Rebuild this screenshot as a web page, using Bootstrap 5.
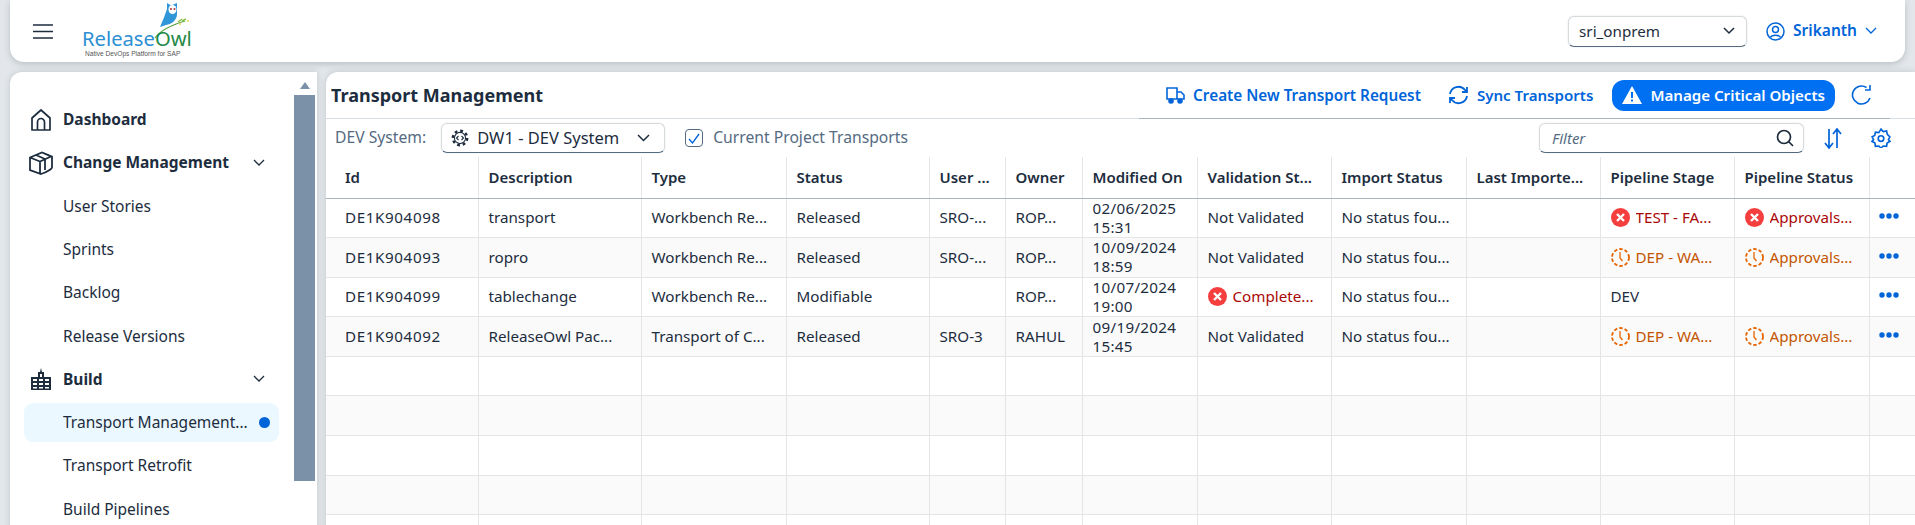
<!DOCTYPE html>
<html lang="en"><head><meta charset="utf-8"><title>Transport Management</title>
<link href="https://cdn.jsdelivr.net/npm/bootstrap@5.3.0/dist/css/bootstrap.min.css" rel="stylesheet">
<style>
html,body{height:525px;overflow:hidden}
body{background:#e3e7eb;font-family:"Noto Sans",sans-serif;font-size:15px;color:#1d2d3e;width:1915px}
.shell{padding:0 10px 0 10px;height:525px;display:grid;grid-template-rows:62px 1fr;grid-template-columns:307px 1fr;column-gap:9px;row-gap:10px}
.topbar{grid-column:1/3;background:#fff;border-radius:0 0 14px 14px;box-shadow:0 2px 6px rgba(60,70,80,.25);padding:0 28px 0 23px}
.menu-btn{width:20px;margin-right:29px;flex:none}
.logo{width:108px;height:58px;position:relative;flex:none;align-self:flex-start}
.logo svg{position:absolute;left:60px;top:0}
.logo-word{position:absolute;left:0;top:28px;font:400 20.2px/21px "Noto Sans",sans-serif;color:#2d8fd2;white-space:nowrap}
.logo-word b{font-weight:400;color:#1f8a46}
.logo-sub{position:absolute;left:3px;top:50px;font:400 6.6px/8px "Liberation Sans",sans-serif;color:#555;white-space:nowrap}
.tenant{width:179px;height:31px;border:1px solid #d5dadd;border-bottom-color:#556b82;border-radius:6px;padding:0 11px 0 10px;background:#fff;color:#1d2d3e;margin-right:19px;box-shadow:0 0 2px rgba(0,0,0,.12)}
.tenant span{font-size:15.2px}
.user-link{color:#0064d9;font-weight:600;font-size:15.5px;gap:8px}
.sidepanel{background:#fff;border-radius:12px 0 0 0;overflow:hidden;position:relative;padding:26px 38px 0 14px;box-shadow:0 0 6px rgba(60,70,80,.2);height:460px}
.side-track{position:absolute;right:2px;top:0;bottom:0;width:21px}
.side-arrow{width:0;height:0;border:5.5px solid transparent;border-bottom:7px solid #7b91a8;border-top:0;margin:10px auto 6px}
.side-thumb{height:386px;background:#7b91a8}
.nav-row{height:43.3px;margin:0;padding:0 0 0 39px;white-space:nowrap;font-size:15.5px;position:relative;list-style:none}
.nav-head{font-weight:700;padding-left:0;gap:10px}
.nav-head svg.ico{width:24px;height:24px;margin-left:5px;margin-right:0;flex:none}
.nav-head .chev{margin-left:auto;margin-right:14px}
.nav-active{background:#ebf8ff;border-radius:9px;height:39px;margin:2px 0 2.3px}
.dot{width:11px;height:11px;border-radius:50%;background:#0064d9;margin-left:auto;margin-right:9px;flex:none}
.mainpanel{background:#fff;border-radius:12px 0 0 0;overflow:hidden;margin-right:-10px;box-shadow:0 0 6px rgba(60,70,80,.2);height:460px}
.titlebar{height:47px;padding:0 43px 0 5px;border-bottom:1px solid #d9dee2;position:relative}
.titlebar h1{font-size:18px;font-weight:700;margin:2px 0 0}
.titlebar::after{content:"";position:absolute;left:813px;right:25px;bottom:-1px;height:1px;background:#a9b4be}
.act{color:#0064d9;font-weight:600;font-size:15.3px;gap:8px;white-space:nowrap;margin-right:27px}
.act-sync{margin-right:19px;font-size:15.1px}
.act-crit{background:#0070f2;color:#fff;border-radius:12px;height:31px;padding:0 10px 0 10px;margin-right:16px;font-size:15.1px}
.filterbar{height:38px;padding:4px 24px 4px 9px}
.lbl{color:#556b82;font-size:15.7px}
.sys-select{width:224px;height:30px;border:1px solid #d5dadd;border-bottom-color:#556b82;border-radius:6px;margin-left:15px;margin-right:20px;padding:0 14px 0 9px;box-shadow:0 0 2px rgba(0,0,0,.1);gap:8px;font-size:16.5px}
.check-box{width:18px;height:18px;border:1px solid #556b82;border-radius:4px;margin-right:10px}
.filter-box{width:265px;height:30px;border:1px solid #d5dadd;border-bottom-color:#556b82;border-radius:6px;padding:0 9px 0 12px;box-shadow:0 0 2px rgba(0,0,0,.1);font-style:italic;color:#556b82;margin-right:19px}
.sort-ico{margin-right:28px}
.grid-tbl{table-layout:fixed;width:1589px;margin:0;border-collapse:collapse;font-size:15.2px;color:#1d2d3e}
.grid-tbl th,.grid-tbl td{padding:0 8px 0 19px;border:0;border-right:1px solid #e5e5e5;white-space:nowrap;overflow:hidden;text-overflow:ellipsis;vertical-align:middle;background:transparent;color:inherit;box-shadow:none}
.grid-tbl th{height:41px;font-size:15px;font-weight:600;border-bottom:1px solid #a9b4be;padding-left:19px}
.grid-tbl td{height:39.6px;border-bottom:1px solid #e5e5e5;line-height:19px}
.grid-tbl tbody tr:nth-child(even) td{background:#fafafa}
.grid-tbl .c-id{width:152px}.grid-tbl .c-desc{width:163px}.grid-tbl .c-type{width:145px}.grid-tbl .c-status{width:143px}.grid-tbl .c-user{width:76px}.grid-tbl .c-own{width:77px}.grid-tbl .c-mod{width:115px}.grid-tbl .c-val{width:134px}.grid-tbl .c-imp{width:135px}.grid-tbl .c-last{width:134px}.grid-tbl .c-stage{width:134px}.grid-tbl .c-pipe{width:135px}.grid-tbl .c-more{width:46px}
.grid-tbl td.wrap{white-space:normal;line-height:19px;padding-left:10px;padding-right:0;letter-spacing:.3px}
.grid-tbl td.code-cell{letter-spacing:.6px}
.grid-tbl th.tight,.grid-tbl td.tight{padding-left:10px;padding-right:6px}
.grid-tbl td.stat,.grid-tbl th.stat{padding-left:10px}
.grid-tbl td.more{padding:0 0 6px 9px;border-right:0}
.grid-tbl th.more{border-right:0}
.sts{display:flex;align-items:center;gap:6px;min-width:0}
.sts span{overflow:hidden;text-overflow:ellipsis;white-space:nowrap;min-width:0}
.sts svg{flex:none}
.grid-tbl td.neg{color:#aa0808}.grid-tbl td.crit{color:#c35500}
</style></head><body>
<div class="shell">
<header class="topbar d-flex align-items-center">
 <svg class="menu-btn" viewBox="0 0 20 15" height="15"><path d="M0 1h20M0 7.5h20M0 14h20" stroke="#1d2d3e" stroke-width="1.7"/></svg>
 <div class="logo">
  <svg width="48" height="40" viewBox="0 0 48 40"><path d="M18 27c3-7 5-12 7-18l0-6 4 2.500 6-2.500 0 11c0 6-5 10-11 11z" fill="#2f96d8"/><ellipse cx="30.500" cy="9.500" rx="4" ry="4.500" fill="#fff"/><circle cx="29" cy="9" r="1" fill="#a33"/><circle cx="32.500" cy="9" r="1" fill="#a33"/><path d="M13 38c6-8 16-13 30-17" fill="none" stroke="#4f9e3a" stroke-width="1.200"/><path d="M36 22l4-3M40 21l4-2" stroke="#8bc34a" stroke-width="1.500"/><circle cx="46" cy="21" r="1" fill="#e8d44a"/><circle cx="38" cy="24" r="1" fill="#e8d44a"/></svg>
  <div class="logo-word">Release<b>Owl</b></div>
  <div class="logo-sub">Native DevOps Platform for SAP</div>
 </div>
 <div class="tenant d-flex align-items-center justify-content-between ms-auto"><span>sri_onprem</span><svg width="12" height="8" viewBox="0 0 12 8"><path d="M1 1l5 5 5-5" fill="none" stroke="#1d2d3e" stroke-width="1.500"/></svg></div>
 <div class="user-link d-flex align-items-center">
  <svg width="19" height="19" viewBox="0 0 19 19" fill="none" stroke="#0064d9" stroke-width="1.500"><circle cx="9.500" cy="9.500" r="8.500"/><circle cx="9.500" cy="7.500" r="3"/><path d="M4.500 15.500c1-3 9-3 10 0"/></svg>
  <span>Srikanth</span>
  <svg width="12" height="8" viewBox="0 0 12 8"><path d="M1 1l5 5 5-5" fill="none" stroke="#0064d9" stroke-width="1.300"/></svg>
 </div>
</header>
<aside class="sidepanel">
 <div class="side-track"><div class="side-arrow"></div><div class="side-thumb"></div></div>
 <ul class="p-0 m-0">
  <li class="nav-row nav-head d-flex align-items-center"><svg class="ico" viewBox="0 0 24 24" fill="none" stroke="#1d2d3e" stroke-width="1.700"><path d="M3 22V10l9-8 9 8v12z" stroke-linejoin="round"/><path d="M8.500 22v-8a3.500 3.500 0 017 0v8"/></svg>Dashboard</li>
  <li class="nav-row nav-head d-flex align-items-center"><svg class="ico" viewBox="0 0 24 24" fill="none" stroke="#1d2d3e" stroke-width="1.800"><path d="M1 6.500l12-5 10 4v11c0 1-5 5-11 6.500l-11-4zM1 6.500l10 4v12M13 1.500l9 4-11 5M7 4l9 4v11"/></svg>Change Management<svg class="chev" width="12" height="8" viewBox="0 0 12 8"><path d="M1 1l5 5 5-5" fill="none" stroke="#1d2d3e" stroke-width="1.300"/></svg></li>
  <li class="nav-row d-flex align-items-center">User Stories</li>
  <li class="nav-row d-flex align-items-center">Sprints</li>
  <li class="nav-row d-flex align-items-center">Backlog</li>
  <li class="nav-row d-flex align-items-center">Release Versions</li>
  <li class="nav-row nav-head d-flex align-items-center"><svg class="ico" viewBox="0 0 24 24" fill="#1d2d3e"><path d="M12 1l1 4h2v5h7v13H2V10h7V5h2zM4 12v2h4v-2zm6 0v2h4v-2zm6 0v2h4v-2zM4 16v2h4v-2zm6 0v2h4v-2zm6 0v2h4v-2zM4 20v1.500h4V20zm6 0v1.500h4V20zm6 0v1.500h4V20zM11 7v3h2V7z" fill-rule="evenodd"/></svg>Build<svg class="chev" width="12" height="8" viewBox="0 0 12 8"><path d="M1 1l5 5 5-5" fill="none" stroke="#1d2d3e" stroke-width="1.300"/></svg></li>
  <li class="nav-row nav-active d-flex align-items-center">Transport Management...<span class="dot"></span></li>
  <li class="nav-row d-flex align-items-center">Transport Retrofit</li>
  <li class="nav-row d-flex align-items-center">Build Pipelines</li>
 </ul>
</aside>
<main class="mainpanel">
 <div class="titlebar d-flex align-items-center">
  <h1>Transport Management</h1>
  <div class="act d-flex align-items-center ms-auto"><svg width="19" height="17" viewBox="0 0 19 17" fill="none" stroke="#0064d9" stroke-width="1.600"><path d="M1 1h10v11H1zM11 5h4l3 3v4h-7"/><circle cx="5" cy="14" r="2" fill="#0064d9"/><circle cx="14" cy="14" r="2" fill="#0064d9"/></svg>Create New Transport Request</div>
  <div class="act act-sync d-flex align-items-center"><svg width="21" height="20" viewBox="0 0 21 20" fill="none" stroke="#0064d9" stroke-width="1.800"><path d="M2 9a8.500 8.500 0 0115-4l2 2M19 2v5h-5M19 11a8.500 8.500 0 01-15 4l-2-2M2 18v-5h5"/></svg>Sync Transports</div>
  <div class="act act-crit d-flex align-items-center"><svg width="20" height="18" viewBox="0 0 20 18"><path d="M10 0l10 18H0z" fill="#fff"/><rect x="9" y="6" width="2" height="6" fill="#0070f2"/><rect x="9" y="13.500" width="2" height="2" fill="#0070f2"/></svg>Manage Critical Objects</div>
  <svg width="21" height="22" viewBox="0 0 21 22" fill="none" stroke="#0064d9" stroke-width="1.600"><path d="M15.500 3.500A9 9 0 1019 14M19 1v5h-5"/></svg>
 </div>
 <div class="filterbar d-flex align-items-center">
  <span class="lbl">DEV System:</span>
  <div class="sys-select d-flex align-items-center"><svg width="18" height="18" viewBox="0 0 18 18" fill="none" stroke="#1d2d3e"><circle cx="9" cy="9" r="7.200" stroke-width="2.400" stroke-dasharray="2.800 2.850"/><circle cx="9" cy="9" r="5.600" stroke-width="1.100"/><path d="M7.500 7L5.500 9l2 2M10.500 7l2 2-2 2" stroke-width="1.100"/></svg><span>DW1 - DEV System</span><svg class="ms-auto" width="13" height="8" viewBox="0 0 13 8"><path d="M1 1l5.500 5.500L12 1" fill="none" stroke="#1d2d3e" stroke-width="1.500"/></svg></div>
  <div class="check-box d-flex align-items-center justify-content-center"><svg width="12" height="11" viewBox="0 0 12 11"><path d="M1 6l3.500 4L11 1" fill="none" stroke="#0064d9" stroke-width="1.300"/></svg></div>
  <span class="lbl">Current Project Transports</span>
  <div class="filter-box d-flex align-items-center justify-content-between ms-auto"><span>Filter</span><svg width="18" height="18" viewBox="0 0 18 18" fill="none" stroke="#1d2d3e" stroke-width="1.700"><circle cx="8" cy="8" r="6.500"/><path d="M12.500 12.500L17 17"/></svg></div>
  <svg class="sort-ico" width="20" height="21" viewBox="0 0 20 21" fill="none" stroke="#0064d9" stroke-width="1.700"><path d="M6 1v19M2 15l4 5 4-5M14 20V1M10 6l4-5 4 5"/></svg>
  <svg width="20" height="20" viewBox="0 0 18 18" fill="none" stroke="#0064d9" stroke-width="1.500"><path d="M9 1l2 2.200 3-.5.700 3L17 8l-1.300 2.500L17 12l-2.500 1.500-.5 3-3-.3L9 18l-2-1.800-3 .3-.5-3L1 12l1.300-1.500L1 8l2.300-1.300.7-3 3 .5z"/><circle cx="9" cy="9.500" r="2.500"/></svg>
 </div>
 <table class="table grid-tbl">
  <thead><tr><th class="c-id">Id</th><th class="c-desc tight">Description</th><th class="c-type tight">Type</th><th class="c-status tight">Status</th><th class="c-user tight">User ...</th><th class="c-own tight">Owner</th><th class="c-mod tight">Modified On</th><th class="c-val tight">Validation St...</th><th class="c-imp tight">Import Status</th><th class="c-last tight">Last Importe...</th><th class="c-stage tight">Pipeline Stage</th><th class="c-pipe tight">Pipeline Status</th><th class="c-more more"></th></tr></thead>
  <tbody>
  <tr><td class="code-cell">DE1K904098</td><td class="tight">transport</td><td class="tight">Workbench Re...</td><td class="tight">Released</td><td class="tight">SRO-...</td><td class="tight">ROP...</td><td class="wrap">02/06/2025 15:31</td><td class="tight">Not Validated</td><td class="tight">No status fou...</td><td></td><td class="stat neg"><div class="sts"><svg width="19" height="19" viewBox="0 0 19 19"><circle cx="9.500" cy="9.500" r="9.500" fill="#f53e3e"/><path d="M6 6l7 7M13 6l-7 7" stroke="#fff" stroke-width="2.400"/></svg><span>TEST - FA...</span></div></td><td class="stat neg"><div class="sts"><svg width="19" height="19" viewBox="0 0 19 19"><circle cx="9.500" cy="9.500" r="9.500" fill="#f53e3e"/><path d="M6 6l7 7M13 6l-7 7" stroke="#fff" stroke-width="2.400"/></svg><span>Approvals...</span></div></td><td class="more"><svg width="20" height="6" viewBox="0 0 20 6" fill="#0064d9"><circle cx="3" cy="3" r="2.700"/><circle cx="10" cy="3" r="2.700"/><circle cx="17" cy="3" r="2.700"/></svg></td></tr>
  <tr><td class="code-cell">DE1K904093</td><td class="tight">ropro</td><td class="tight">Workbench Re...</td><td class="tight">Released</td><td class="tight">SRO-...</td><td class="tight">ROP...</td><td class="wrap">10/09/2024 18:59</td><td class="tight">Not Validated</td><td class="tight">No status fou...</td><td></td><td class="stat crit"><div class="sts"><svg width="19" height="19" viewBox="0 0 19 19" fill="none" stroke="#e76500" stroke-width="1.800"><circle cx="9.500" cy="9.500" r="8.500" stroke-dasharray="3.500 2"/><path d="M9 4v6l2.500 3" stroke-width="1.300"/></svg><span>DEP - WA...</span></div></td><td class="stat crit"><div class="sts"><svg width="19" height="19" viewBox="0 0 19 19" fill="none" stroke="#e76500" stroke-width="1.800"><circle cx="9.500" cy="9.500" r="8.500" stroke-dasharray="3.500 2"/><path d="M9 4v6l2.500 3" stroke-width="1.300"/></svg><span>Approvals...</span></div></td><td class="more"><svg width="20" height="6" viewBox="0 0 20 6" fill="#0064d9"><circle cx="3" cy="3" r="2.700"/><circle cx="10" cy="3" r="2.700"/><circle cx="17" cy="3" r="2.700"/></svg></td></tr>
  <tr><td class="code-cell">DE1K904099</td><td class="tight">tablechange</td><td class="tight">Workbench Re...</td><td class="tight">Modifiable</td><td class="tight"></td><td class="tight">ROP...</td><td class="wrap">10/07/2024 19:00</td><td class="stat neg"><div class="sts"><svg width="19" height="19" viewBox="0 0 19 19"><circle cx="9.500" cy="9.500" r="9.500" fill="#f53e3e"/><path d="M6 6l7 7M13 6l-7 7" stroke="#fff" stroke-width="2.400"/></svg><span>Complete...</span></div></td><td class="tight">No status fou...</td><td></td><td class="tight">DEV</td><td></td><td class="more"><svg width="20" height="6" viewBox="0 0 20 6" fill="#0064d9"><circle cx="3" cy="3" r="2.700"/><circle cx="10" cy="3" r="2.700"/><circle cx="17" cy="3" r="2.700"/></svg></td></tr>
  <tr><td class="code-cell">DE1K904092</td><td class="tight">ReleaseOwl Pac...</td><td class="tight">Transport of C...</td><td class="tight">Released</td><td class="tight">SRO-3</td><td class="tight">RAHUL</td><td class="wrap">09/19/2024 15:45</td><td class="tight">Not Validated</td><td class="tight">No status fou...</td><td></td><td class="stat crit"><div class="sts"><svg width="19" height="19" viewBox="0 0 19 19" fill="none" stroke="#e76500" stroke-width="1.800"><circle cx="9.500" cy="9.500" r="8.500" stroke-dasharray="3.500 2"/><path d="M9 4v6l2.500 3" stroke-width="1.300"/></svg><span>DEP - WA...</span></div></td><td class="stat crit"><div class="sts"><svg width="19" height="19" viewBox="0 0 19 19" fill="none" stroke="#e76500" stroke-width="1.800"><circle cx="9.500" cy="9.500" r="8.500" stroke-dasharray="3.500 2"/><path d="M9 4v6l2.500 3" stroke-width="1.300"/></svg><span>Approvals...</span></div></td><td class="more"><svg width="20" height="6" viewBox="0 0 20 6" fill="#0064d9"><circle cx="3" cy="3" r="2.700"/><circle cx="10" cy="3" r="2.700"/><circle cx="17" cy="3" r="2.700"/></svg></td></tr>
  <tr><td></td><td></td><td></td><td></td><td></td><td></td><td></td><td></td><td></td><td></td><td></td><td></td><td class="more"></td></tr>
  <tr><td></td><td></td><td></td><td></td><td></td><td></td><td></td><td></td><td></td><td></td><td></td><td></td><td class="more"></td></tr>
  <tr><td></td><td></td><td></td><td></td><td></td><td></td><td></td><td></td><td></td><td></td><td></td><td></td><td class="more"></td></tr>
  <tr><td></td><td></td><td></td><td></td><td></td><td></td><td></td><td></td><td></td><td></td><td></td><td></td><td class="more"></td></tr>
  <tr><td></td><td></td><td></td><td></td><td></td><td></td><td></td><td></td><td></td><td></td><td></td><td></td><td class="more"></td></tr>
  </tbody>
 </table>
</main>
</div>
<script src="https://cdn.jsdelivr.net/npm/bootstrap@5.3.0/dist/js/bootstrap.bundle.min.js"></script>
</body></html>
